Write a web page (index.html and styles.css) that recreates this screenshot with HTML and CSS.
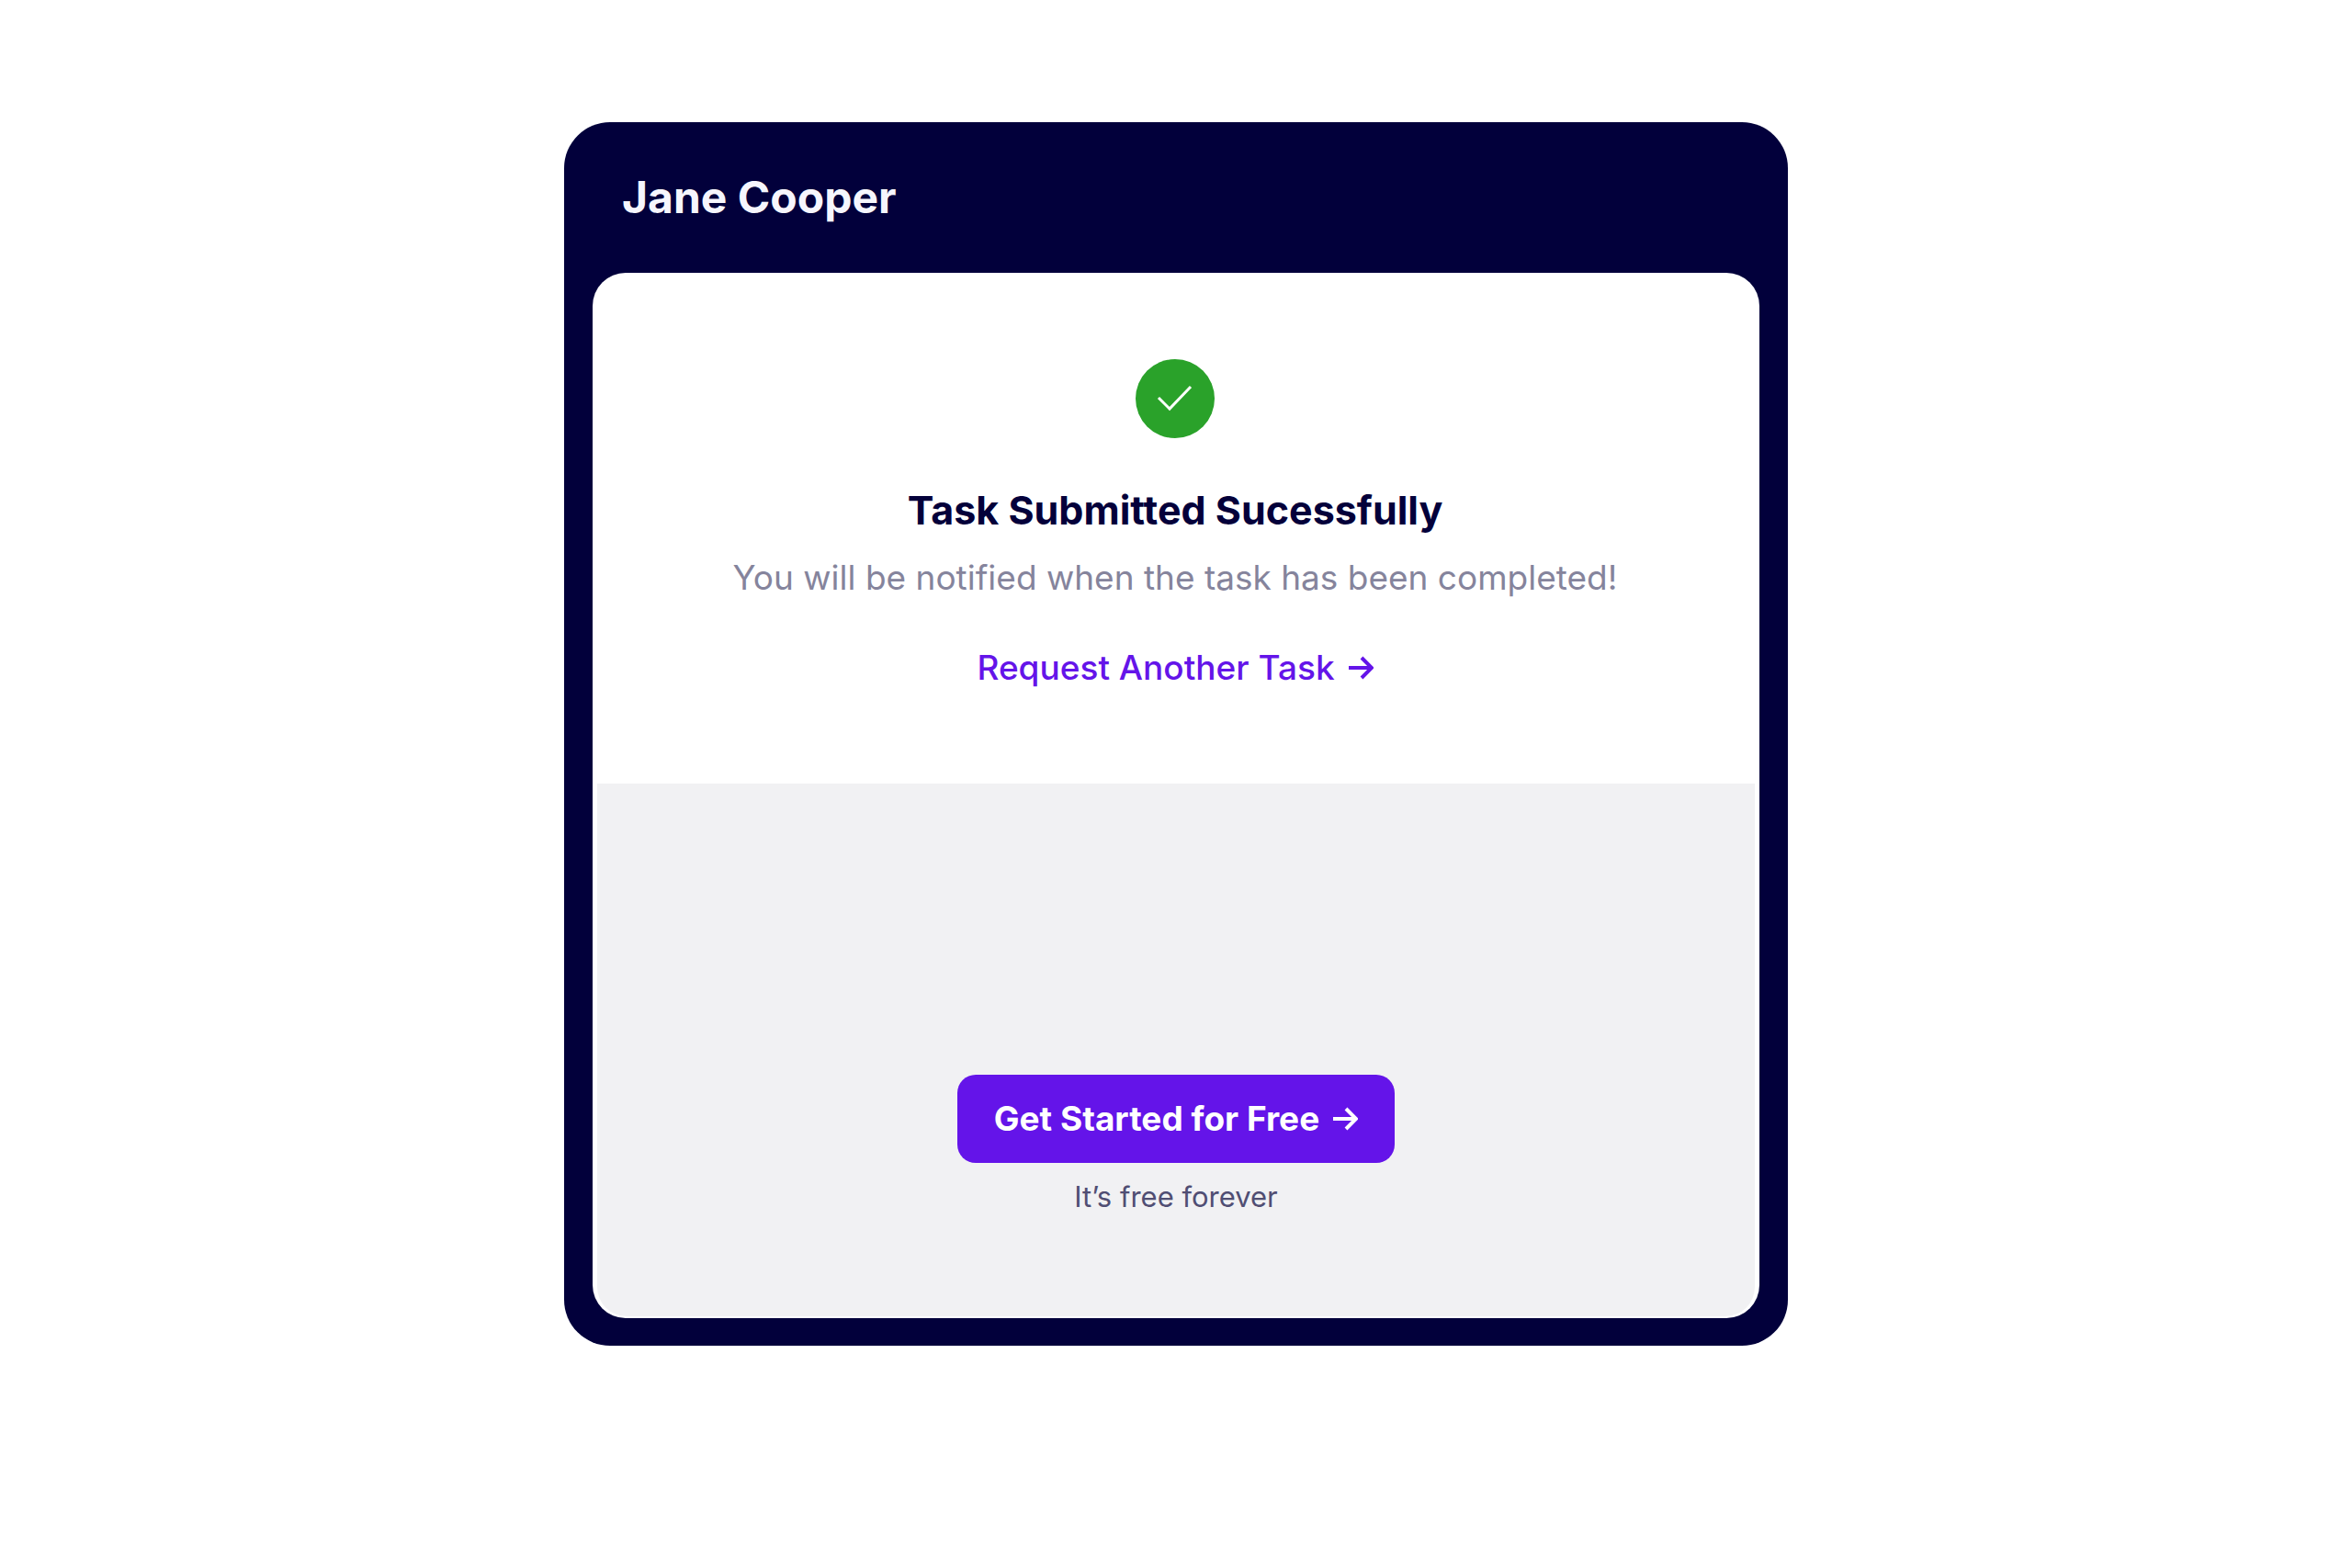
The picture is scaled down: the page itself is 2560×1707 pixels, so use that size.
FILE: index.html
```html
<!DOCTYPE html>
<html lang="en">
<head>
    <meta charset="UTF-8">
    <meta name="viewport" content="width=device-width, initial-scale=1.0">
    <title>Jane Cooper | Task Submitted</title>
    <link rel="stylesheet" href="styles.css">
</head>
<body>
    <main class="card">
        <header class="card-header">
            <h1>Jane Cooper</h1>
        </header>
        <div class="card-body">
            <section class="status">
                <svg class="check-icon" viewBox="0 0 86 86" aria-hidden="true">
                    <circle cx="43" cy="43" r="43" fill="#2aa22a"/>
                    <path d="M25 42l12 12 23-24" fill="none" stroke="#fff" stroke-width="3"/>
                </svg>
                <h2>Task Submitted Sucessfully</h2>
                <p class="message">You will be notified when the task has been completed!</p>
                <a href="#" class="request-link">
                    Request Another Task
                    <svg class="arrow" viewBox="0 0 28 28" aria-hidden="true">
                        <path d="M1 14h24M15 3l11 11-11 11"/>
                    </svg>
                </a>
            </section>
            <section class="signup">
                <button type="button" class="start-btn">
                    Get Started for Free
                    <svg class="arrow" viewBox="0 0 28 28" aria-hidden="true">
                        <path d="M1 14h24M15 3l11 11-11 11"/>
                    </svg>
                </button>
                <p class="note">It’s free forever</p>
            </section>
        </div>
    </main>
</body>
</html>
```
FILE: styles.css
```css
* {
    box-sizing: border-box;
    margin: 0;
    padding: 0;
}

body {
    font-family: 'Inter', 'Liberation Sans', sans-serif;
    background-color: #fff;
    color: #04003a;
    padding: 133px 20px;
}

.card {
    width: 100%;
    max-width: 1332px;
    margin: 0 auto;
    padding: 0 31px 30px;
    background-color: #02003b;
    border-radius: 50px;
}

.card-header {
    padding: 52px 32px;
}

h1 {
    color: #f6f6fd;
    font-size: 48px;
    font-weight: 700;
    line-height: 60px;
}

.card-body {
    background-color: #fff;
    border-radius: 36px;
    padding: 0 5px 2px;
}

.status {
    display: flex;
    flex-direction: column;
    align-items: center;
    text-align: center;
    padding: 94px 42px 102px 40px;
}

.check-icon {
    width: 86px;
    height: 86px;
    margin-bottom: 48px;
}

h2 {
    font-size: 43px;
    font-weight: 700;
    line-height: 60px;
    margin-bottom: 20px;
}

.message {
    color: #85849c;
    font-size: 37px;
    line-height: 48px;
    margin-bottom: 50px;
}

.request-link {
    display: flex;
    align-items: center;
    gap: 14px;
    color: #6414e9;
    font-size: 37px;
    font-weight: 500;
    line-height: 48px;
    text-decoration: none;
}

.arrow {
    width: 28px;
    height: 28px;
    flex-shrink: 0;
    fill: none;
    stroke: currentColor;
    stroke-width: 4;
}

.signup {
    display: flex;
    flex-direction: column;
    align-items: center;
    background-color: #f1f1f3;
    border-radius: 0 0 32px 32px;
    padding: 317px 40px 110px;
}

.start-btn {
    display: flex;
    align-items: center;
    gap: 14px;
    padding: 24px 40px;
    background-color: #6414e9;
    color: #fff;
    border: none;
    border-radius: 20px;
    font-family: inherit;
    font-size: 37px;
    font-weight: 700;
    line-height: 48px;
    cursor: pointer;
}

.note {
    color: #504e73;
    font-size: 31px;
    line-height: 40px;
    margin-top: 17px;
}
```
